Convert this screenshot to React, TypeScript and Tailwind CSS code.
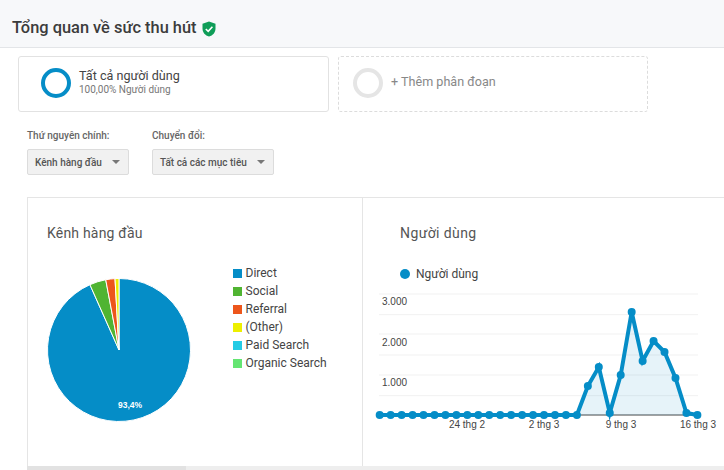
const legend = [
  { label: 'Direct', color: '#058dc7' },
  { label: 'Social', color: '#50b432' },
  { label: 'Referral', color: '#ed561b' },
  { label: '(Other)', color: '#edef00' },
  { label: 'Paid Search', color: '#24cbe5' },
  { label: 'Organic Search', color: '#64e572' },
]

const values = [0, 0, 0, 0, 0, 0, 0, 0, 0, 0, 0, 0, 0, 0, 0, 0, 0, 0, 0, 29, 48, 2, 40, 103, 54, 74, 63, 37, 2, 0]
const points = values.map((v, i) => [16.7 + i * 10.955, 136 - v])
const linePath = points.map((p) => p.join(',')).join(' ')

function polar(deg: number) {
  const r = 71.5
  const a = (deg * Math.PI) / 180
  return `${72 + r * Math.sin(a)} ${72 - r * Math.cos(a)}`
}

function Slice({ from, to, color, large }: { from: number; to: number; color: string; large?: boolean }) {
  return (
    <path
      d={`M72 72 L${polar(from)} A71.5 71.5 0 ${large ? 1 : 0} 1 ${polar(to)} Z`}
      fill={color}
      stroke="#fff"
      strokeWidth="1"
    />
  )
}

export default function App() {
  return (
    <div className="w-[724px] h-[470px] overflow-hidden bg-white text-[#333] font-['Roboto',sans-serif]">
      <div className="h-[48px] pl-3 pt-[16px] bg-[#f7f8fa] border-b border-[#e3e5e8] flex items-start gap-[5px]">
        <h1 className="text-[16.4px] leading-[24px] font-medium text-[#3c3c3c]">Tổng quan về sức thu hút</h1>
        <svg width="14" height="16" viewBox="0 0 14 16" className="mt-[5px]">
          <path d="M7 0.5 L13.5 2.8 V7.5 C13.5 11.5 10.8 14.5 7 15.5 C3.2 14.5 0.5 11.5 0.5 7.5 V2.8 Z" fill="#0f9d58" />
          <path d="M3.8 8 L6.2 10.3 L10.4 5.8" fill="none" stroke="#fff" strokeWidth="1.6" />
        </svg>
      </div>

      <div className="flex gap-[9px] pl-[18px] mt-2">
        <div className="w-[311px] h-[56px] border border-[#e2e2e2] rounded-[3px] flex items-center pl-[22px] gap-[8px]">
          <div className="w-[30px] h-[30px] rounded-full border-[4px] border-[#058dc7] -mt-[2px]" />
          <div className="-mt-[5px]">
            <div className="text-[12.6px] leading-[17px] text-[#444]">Tất cả người dùng</div>
            <div className="text-[10px] leading-[12px] text-[#777]">100,00% Người dùng</div>
          </div>
        </div>
        <div className="w-[310px] h-[56px] border border-dashed border-[#dcdcdc] rounded-[3px] flex items-center pl-[14px] gap-[8px]">
          <div className="w-[30px] h-[30px] rounded-full border-[4px] border-[#e5e5e5] -mt-[2px]" />
          <div className="text-[12.6px] leading-[17px] text-[#888] -mt-[6px]">+ Thêm phân đoạn</div>
        </div>
      </div>

      <div className="flex gap-[23px] pl-[27px] mt-[17px]">
        <div>
          <div className="text-[10px] leading-[14px] font-medium text-[#666]">Thứ nguyên chính:</div>
          <div className="mt-[6px] w-[102px] h-[26px] bg-[#f1f1f1] border border-[#dcdcdc] rounded-[2px] flex items-center justify-between pl-[7px] pr-2">
            <span className="text-[10px] font-medium text-[#555]">Kênh hàng đầu</span>
            <span className="w-0 h-0 border-x-[4px] border-x-transparent border-t-[4px] border-t-[#777]" />
          </div>
        </div>
        <div>
          <div className="text-[10px] leading-[14px] font-medium text-[#666]">Chuyển đổi:</div>
          <div className="mt-[6px] w-[122px] h-[26px] bg-[#f1f1f1] border border-[#dcdcdc] rounded-[2px] flex items-center justify-between pl-[7px] pr-2">
            <span className="text-[10px] font-medium text-[#555]">Tất cả các mục tiêu</span>
            <span className="w-0 h-0 border-x-[4px] border-x-transparent border-t-[4px] border-t-[#777]" />
          </div>
        </div>
      </div>

      <div className="ml-[27px] mt-[22px] h-[269px] border-t border-l border-[#e5e5e5] flex">
        <div className="w-[335px] shrink-0 border-r border-[#e5e5e5] pl-[19px] pt-[25px]">
          <div className="text-[14px] leading-[20px] text-[#555] tracking-[0.2px]">Kênh hàng đầu</div>
          <div className="flex mt-[21px]">
            <svg width="144" height="144" viewBox="0 0 144 144" className="mt-[14px] -ml-[0.5px] shrink-0">
              <Slice from={0} to={336} color="#058dc7" large />
              <Slice from={336} to={349.3} color="#50b432" />
              <Slice from={349.3} to={356.8} color="#ed561b" />
              <Slice from={356.8} to={360} color="#edef00" />
              <text x="83" y="130" textAnchor="middle" fontSize="8.5" fontWeight="700" fill="#fff" fontFamily="Liberation Sans">93,4%</text>
            </svg>
            <div className="ml-[42px]">
              {legend.map((item) => (
                <div key={item.label} className="h-[18px] flex items-center gap-[4px] text-[12px] text-[#444]">
                  <span className="w-[9px] h-[9px]" style={{ backgroundColor: item.color }} />
                  {item.label}
                </div>
              ))}
            </div>
          </div>
        </div>
        <div className="flex-1 pl-[37px] pt-[25px]">
          <div className="text-[14px] leading-[20px] text-[#555] tracking-[0.4px]">Người dùng</div>
          <div className="flex items-center gap-[6px] mt-[22px] text-[12px] leading-[18px] text-[#444]">
            <span className="w-[10px] h-[10px] rounded-full bg-[#058dc7]" />
            Người dùng
          </div>
          <svg width="362" height="160" viewBox="0 0 362 160" className="-ml-[37px] -mt-[4px] block">
            {[15, 35.7, 55, 76, 96, 116.7].map((y) => (
              <line key={y} x1="16" x2="335" y1={y} y2={y} stroke="#f1f1f1" />
            ))}
            <line x1="16" x2="335" y1="136" y2="136" stroke="#444" />
            <polygon points={`16.7,136 ${linePath} 334.4,136`} fill="#058dc7" fillOpacity="0.1" />
            <polyline points={linePath} fill="none" stroke="#058dc7" strokeWidth="4" />
            {points.map(([x, y]) => (
              <circle key={x} cx={x} cy={y} r="4" fill="#058dc7" />
            ))}
            <g fontSize="10" fill="#444" fontFamily="Liberation Sans">
              <text x="19" y="26">3.000</text>
              <text x="19" y="67">2.000</text>
              <text x="19" y="107">1.000</text>
              <text x="104" y="149" textAnchor="middle">24 thg 2</text>
              <text x="181" y="149" textAnchor="middle">2 thg 3</text>
              <text x="258" y="149" textAnchor="middle">9 thg 3</text>
              <text x="335" y="149" textAnchor="middle">16 thg 3</text>
            </g>
          </svg>
        </div>
      </div>

      <div className="ml-[27px] h-[4px] bg-[#eeeeee]">
        <div className="w-[159px] h-full bg-[#e2e2e2]" />
      </div>
    </div>
  )
}
